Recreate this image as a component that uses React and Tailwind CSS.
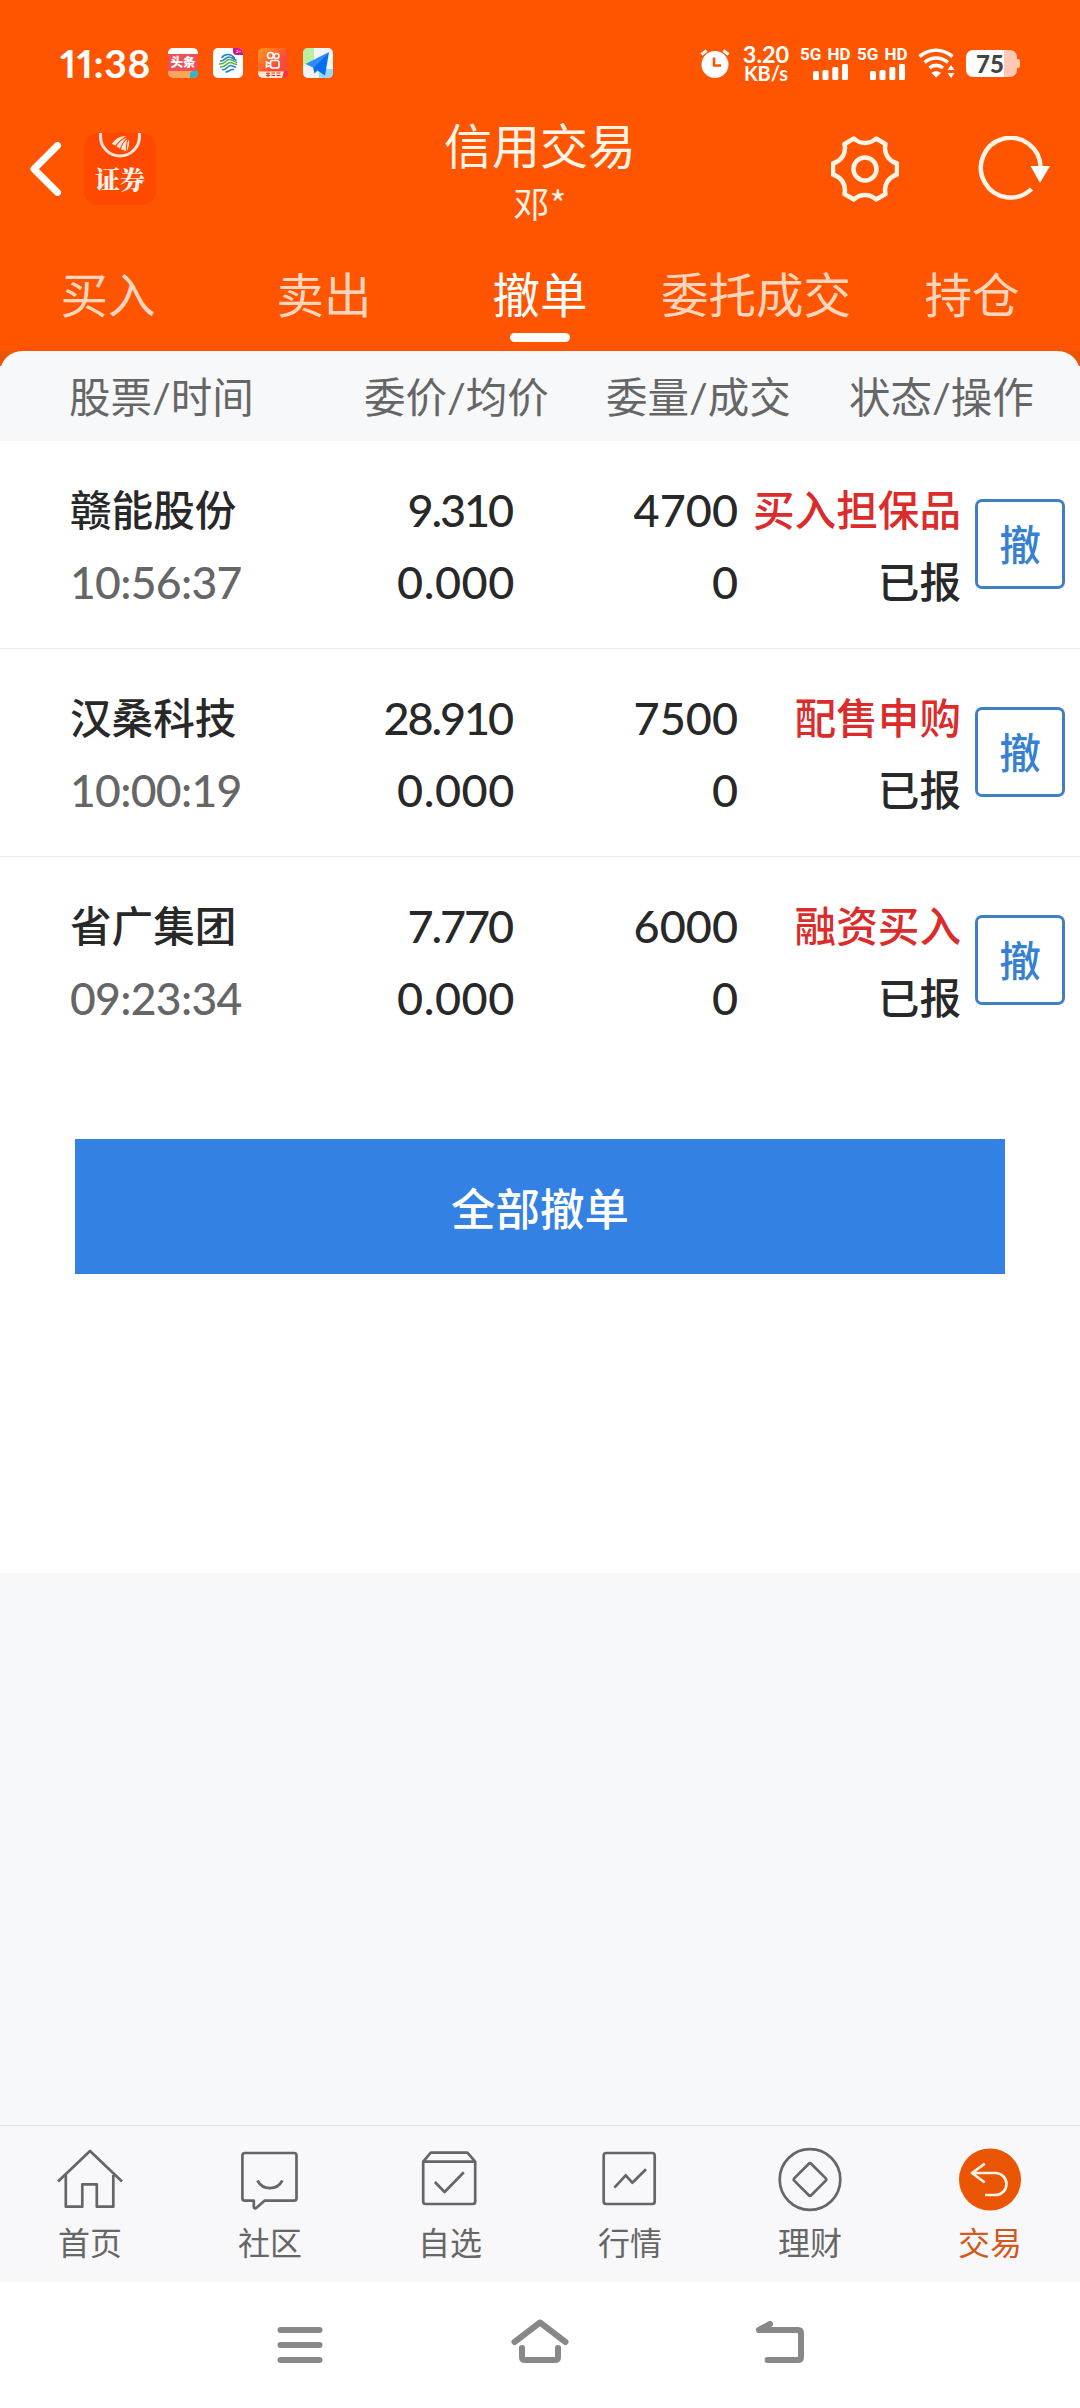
import { useState } from 'react';

const TABS = ['买入', '卖出', '撤单', '委托成交', '持仓'];

const ORDERS = [
  { id: 1, name: '赣能股份', time: '10:56:37', price: '9.310', avg: '0.000', qty: '4700', filled: '0', type: '买入担保品', status: '已报' },
  { id: 2, name: '汉桑科技', time: '10:00:19', price: '28.910', avg: '0.000', qty: '7500', filled: '0', type: '配售申购', status: '已报' },
  { id: 3, name: '省广集团', time: '09:23:34', price: '7.770', avg: '0.000', qty: '6000', filled: '0', type: '融资买入', status: '已报' },
];

const NAV_ITEMS = [
  {
    label: '首页',
    icon: (
      <path d="M4 37.5 36 7l32 30.5M11.8 31v31.7h16.5V40.3h14.5v22.4h16.5V31" />
    ),
  },
  {
    label: '社区',
    icon: (
      <>
        <path d="M10.9 9H60a2.5 2.5 0 0 1 2.5 2.5v42.7a2.5 2.5 0 0 1-2.5 2.5H30.5l-8.3 7.2c-1 .8-2.4.3-2.4-1v-6.2h-8.9a2.5 2.5 0 0 1-2.5-2.5V11.5A2.5 2.5 0 0 1 10.9 9z" />
        <path d="M23.4 36.5c5.6 10.2 19.4 10.2 25 0" />
      </>
    ),
  },
  {
    label: '自选',
    icon: (
      <>
        <path d="M9.2 17.7 16.8 8.7h36.6l7.8 9v39.8a2.5 2.5 0 0 1-2.5 2.5h-47a2.5 2.5 0 0 1-2.5-2.5zM9.2 17.7h52" />
        <path d="M20.9 38l9.7 10 19.2-19.7" />
      </>
    ),
  },
  {
    label: '行情',
    icon: (
      <>
        <rect x="9.7" y="9" width="51" height="51" rx="2.5" />
        <path d="M20.4 43.7l11.3-12.4 6.6 7.4L52 25.3" />
      </>
    ),
  },
  {
    label: '理财',
    icon: (
      <>
        <circle cx="36" cy="35.5" r="30.3" />
        <rect x="24" y="23.5" width="24" height="24" rx="2" transform="rotate(45 36 35.5)" />
      </>
    ),
  },
  {
    label: '交易',
    active: true,
    icon: (
      <>
        <circle cx="36" cy="35.5" r="31" fill="#ea5504" stroke="none" />
        <path d="M30.8 19.7 18 29l12.8 9.5M18 29h23.5a11 11 0 0 1 0 22H31" stroke="#fff0e4" />
      </>
    ),
  },
];

const Signal = () => (
  <div className="flex w-12 flex-col items-end">
    <span className="w-12 whitespace-nowrap font-[Roboto,sans-serif] text-[17px] leading-[14px] font-bold [word-spacing:2px]">5G HD</span>
    <svg className="mt-[3px] h-4 w-[35px]" viewBox="0 0 35 16" fill="#fff">
      <rect x="0" y="7" width="6" height="9" rx="1.5" />
      <rect x="9.5" y="6" width="6" height="10" rx="1.5" />
      <rect x="19.3" y="3" width="6" height="13" rx="1.5" />
      <rect x="29" y="0" width="6" height="16" rx="1.5" />
    </svg>
  </div>
);

const AppBadges = () => (
  <div className="ml-[18px] flex gap-[15px]">
    <div className="flex h-[30px] w-[30px] flex-col overflow-hidden rounded-[5px] bg-[#f04f55]">
      <div className="h-[6px] bg-white" />
      <div className="h-[17px] text-center text-[12.5px] leading-[18px] font-black whitespace-nowrap text-white">头条</div>
      <div className="flex h-[7px] bg-[#f9a55c]">
        <div className="ml-auto h-[7px] w-[8px] rounded-tl-[4px] bg-[#28b9cf]" />
      </div>
    </div>
    <svg className="h-[30px] w-[30px]" viewBox="0 0 30 30">
      <rect width="30" height="30" rx="5" fill="#fff" />
      <path d="M20 0h5a5 5 0 0 1 5 5v2h-6.5A3.5 3.5 0 0 1 20 3.5z" fill="#d6148a" />
      <path d="M23.5 2.5h1.5v2h-2m4-2v2" stroke="#fff" strokeWidth=".7" fill="none" />
      <g fill="none" strokeWidth="1.6" strokeLinecap="round">
        <path d="M9 9.5c3-4 9-4 12.5.5M7.5 13c4 .5 4.500-4 8.500-4 3 0 4 2 7 3" stroke="#2483c6" />
        <path d="M6.500 16c6 .5 6-4.500 10-4.500 3 0 4 1.500 7 3" stroke="#59b043" />
        <path d="M7.500 19c6 .5 6-4.500 9.500-4.500 2.500 0 3.500 1.500 6.500 2" stroke="#59b043" />
        <path d="M9.500 21.700c5 0 5-4.200 8-4.200 2 0 3 1.200 5 1.500M13 24c3 0 4-3 7.500-2.500" stroke="#2483c6" />
      </g>
    </svg>
    <svg className="h-[30px] w-[30px]" viewBox="0 0 30 30">
      <defs>
        <linearGradient id="kuaishou" x1="0" y1="0" x2="1" y2="1">
          <stop offset="0" stopColor="#ff9a1f" />
          <stop offset=".6" stopColor="#ff4a35" />
        </linearGradient>
      </defs>
      <rect width="30" height="30" rx="5" fill="url(#kuaishou)" />
      <g fill="none" stroke="#fff" strokeWidth="1.7">
        <circle cx="12.5" cy="7.5" r="3" />
        <circle cx="18.5" cy="8" r="2.5" />
        <rect x="12.5" y="12.5" width="8.5" height="7.5" rx="2" />
        <path d="M12 15.5 8.5 14v5l3.5-1.5" />
      </g>
      <path d="M0 23.5h26l-2 6.500H5a5 5 0 0 1-5-5z" fill="#fde5cf" />
      <path d="M8 25.200h4m-4 2.300h4m-2-3v4.500m3.500-4h3.500m-3.500 2.500h3.500m1.500-2.500h4m-4 2.500h4" stroke="#d8382c" strokeWidth="1.1" />
      <path d="M26 23h4v2a5 5 0 0 1-5 5z" fill="#ff2f4d" />
    </svg>
    <svg className="h-[30px] w-[30px]" viewBox="0 0 30 30">
      <rect width="30" height="30" rx="5" fill="#f1f5f8" />
      <path d="M5 0h6v13L0 17V5a5 5 0 0 1 5-5z" fill="#b9efa0" />
      <path d="M16 21h14v4a5 5 0 0 1-5 5h-9z" fill="#96d9f8" />
      <path d="M26 4 2.5 16l7.5 3.5z" fill="#2a8cff" />
      <path d="M26 4 10 19.5l1.5 6 3-3 7.5 5z" fill="#0a6df0" />
    </svg>
  </div>
);

const StatusBar = () => (
  <div className="flex h-[126px] items-center pr-[60px] pl-[60px] text-white">
    <span className="w-[90px] whitespace-nowrap text-[39px] leading-none font-bold tracking-[0.7px] proportional-nums">11:38</span>
    <AppBadges />
    <div className="ml-auto flex items-center">
      <svg className="h-[30px] w-[30px]" viewBox="0 0 30 30">
        <circle cx="15" cy="16.5" r="13.5" fill="#fff" />
        <path d="M1.5 6.5 6.5 2.5M28.5 6.5l-5-4" stroke="#fff" strokeWidth="3" />
        <path d="M14 9.5v8h7" stroke="#ff5500" strokeWidth="2.5" fill="none" />
      </svg>
      <div className="ml-[12px] flex w-12 flex-col items-center whitespace-nowrap">
        <span className="text-[23.5px] leading-[20px] font-bold">3.20</span>
        <span className="text-[20px] leading-[19px] font-bold">KB/s</span>
      </div>
      <div className="ml-[10px]"><Signal /></div>
      <div className="ml-[9px]"><Signal /></div>
      <svg className="ml-[13px] h-[30px] w-[38px]" viewBox="0 0 38 30" fill="none" stroke="#fff" strokeWidth="3.6">
        <path d="M1.5 8.5c10-8.3 23-8.3 33 0M6.5 14.5c7-6 16.5-6 23.5 0M11.5 20c4-3.5 9.5-3.5 13.5 0" />
        <path d="M18.2 29.5 13.5 25c2.5-2.3 7-2.3 9.500 0z" fill="#fff" stroke="none" />
        <path d="m33 17 3.5 5h-7zm0 13 3.5-5h-7z" fill="#fff" stroke="none" />
      </svg>
      <div className="ml-[10px] flex items-center">
        <div className="flex h-[27px] w-[51px] rounded-[7px] bg-[linear-gradient(90deg,#fff_38px,#ffc9b3_38px)] pl-[10px] text-[24px] leading-[27px] font-black text-[#444]">
          75
        </div>
        <div className="h-[9px] w-[3px] rounded-r-[2px] bg-[#ffc9b3]" />
      </div>
    </div>
  </div>
);

const Header = () => (
  <div className="flex h-[118px] justify-between">
    <div className="flex w-[400px] items-start pt-[7px] pl-[30px]">
      <svg className="mt-[9px] h-[54px] w-[32px]" viewBox="0 0 32 54" fill="none" stroke="#fff" strokeWidth="7" strokeLinecap="round" strokeLinejoin="round">
        <path d="M27.5 3.5 4 27l23.5 23.5" />
      </svg>
      <div className="ml-[22px] h-[72px] w-[72px] rounded-[14px] bg-[#ff4800]">
        <svg className="mx-auto h-[26px] w-[42px]" viewBox="0 0 42 26">
          <path d="M1.5 0v3.5a19.5 19.5 0 0 0 39 0V0" fill="none" stroke="#ffe5da" strokeWidth="3" />
          <g fill="#ffe5da">
            <path d="M13 11C16 5.5 22 2.5 27 3.5 23 5.5 18.5 9 16.5 12.5z" />
            <path d="M17.5 13.5C20 9 24 5.5 28 5c-3.5 3-6 6.5-7 10.5z" />
            <path d="M22 16.5c.5-4 3-8 6.5-10-1.5 4-2 8-1.5 11.5z" />
            <path d="M28 14.5c0-3 .5-6 2-8 .5 4 0 8-2.5 12z" />
          </g>
        </svg>
        <div className="text-center font-['Noto_Serif_CJK_SC','Noto_Sans_CJK_SC',serif] text-[25px] leading-[39px] font-black text-[#fff0e8]">证券</div>
      </div>
    </div>
    <div className="flex flex-col items-center text-[#fff4e6]">
      <h1 className="h-[60px] text-[48px] leading-[39px] font-normal">信用交易</h1>
      <span className="font-['Noto_Sans_CJK_SC',sans-serif] text-[36px] leading-[32px]">邓*</span>
    </div>
    <div className="flex w-[400px] items-start justify-end pt-[10px] pr-[29px]">
      <svg className="h-[66px] w-[68px]" viewBox="0 0 68 66" fill="none" stroke="#fff4e6" strokeWidth="4.5" strokeLinejoin="round">
        <path d="M23 2.5C29 8.5 39 8.5 45 2.5L54.5 8C52.5 17 57 24.5 66 27.5v11C57 41.5 52.5 49 54.5 58L45 63.5C39 57.5 29 57.5 23 63.5L13.5 58C15.5 49 11 41.5 2 38.5v-11C11 24.5 15.5 17 13.5 8z" />
        <circle cx="34" cy="33" r="11.5" />
      </svg>
      <svg className="ml-[79px] h-[66px] w-[73px]" viewBox="0 0 73 66" fill="none" stroke="#fff4e6" strokeWidth="4.5">
        <path d="M53.5 53A29.8 29.8 0 1 1 62.5 31" />
        <path d="M52.5 30h19.5L62 47z" fill="#fff" stroke="none" />
      </svg>
    </div>
  </div>
);

const OrderRow = ({ order, last }) => (
  <div className={`flex h-[208px] pt-[33px] pl-[70px] text-[41.6px] leading-[72px] font-medium text-[#282828] ${last ? '' : 'border-b border-[#ececec]'}`}>
    <div className="w-[224px] whitespace-nowrap">
      <div>{order.name}</div>
      <div className="text-[44.5px] tracking-[-0.7px] text-[#666]">{order.time}</div>
    </div>
    <div className="w-[221px] text-right text-[45px]">
      <div className="pr-[3px] tracking-[-2.1px]">{order.price}</div>
      <div className="tracking-[0.6px]">{order.avg}</div>
    </div>
    <div className="w-[223px] text-right text-[45px]">
      <div>{order.qty}</div>
      <div>{order.filled}</div>
    </div>
    <div className="w-[223px] text-right whitespace-nowrap">
      <div className="text-[#dc2b2b]">{order.type}</div>
      <div>{order.status}</div>
    </div>
    <button className="mt-[25px] ml-[14px] h-[90px] w-[90px] rounded-[7px] border-[3px] border-[#3f7fc8] leading-[86px] font-medium text-[#3580d4]">
      撤
    </button>
  </div>
);

export default function App() {
  const [activeTab, setActiveTab] = useState('撤单');

  return (
    <div className="flex h-[2408px] w-[1080px] flex-col bg-[#f7f8fa] font-[Lato,'Noto_Sans_CJK_SC',sans-serif]">
      {/* Top area */}
      <div className="h-[351px] bg-[#ff5500]">
        <StatusBar />
        <Header />
        <div className="grid h-[107px] grid-cols-5">
          {TABS.map((tab) => (
            <button
              key={tab}
              onClick={() => setActiveTab(tab)}
              className={`flex flex-col items-center pt-[16px] text-[47.5px] leading-[70px] whitespace-nowrap ${activeTab === tab ? 'text-white' : 'text-[#ffd5bd]'}`}
            >
              {tab}
              {activeTab === tab && <span className="mt-[3px] h-[9px] w-[60px] rounded-full bg-white" />}
            </button>
          ))}
        </div>
      </div>

      {/* Column titles */}
      <div className="h-[90px] bg-[linear-gradient(#ea5504_15px,#f7f8fa_15px)]">
        <div className="flex h-full rounded-t-[22px] bg-[#f7f8fa] pl-[69px] text-[41.5px] leading-[93px] whitespace-nowrap text-[#666]">
          <span className="w-[295px]">股票/时间</span>
          <span className="w-[242px]">委价/均价</span>
          <span className="w-[243px]">委量/成交</span>
          <span>状态/操作</span>
        </div>
      </div>

      {/* Orders */}
      <div className="h-[1132px] bg-white">
        {ORDERS.map((order, i) => (
          <OrderRow key={order.id} order={order} last={i === ORDERS.length - 1} />
        ))}
        <button className="mt-[74px] ml-[75px] block h-[135px] w-[930px] bg-[#3381e3] text-[44.5px] leading-[139px] font-medium text-white">
          全部撤单
        </button>
      </div>

      {/* Bottom navigation */}
      <div className="mt-auto grid h-[157px] grid-cols-6 border-t border-[#dfe2e5] bg-[#f8f8fa]">
        {NAV_ITEMS.map((item) => (
          <div key={item.label} className={`flex flex-col items-center pt-[18px] ${item.active ? 'text-[#d4581c]' : 'text-[#666]'}`}>
            <svg className="h-[72px] w-[72px]" viewBox="0 0 72 72" fill="none" stroke="currentColor" strokeWidth="2.7" strokeLinejoin="round">
              {item.icon}
            </svg>
            <span className="text-[32px] leading-[53px]">{item.label}</span>
          </div>
        ))}
      </div>

      {/* System keys */}
      <div className="flex h-[126px] items-center justify-center gap-[176px] bg-white">
        <svg className="h-[64px] w-[64px]" viewBox="0 0 64 64" fill="none" stroke="#888" strokeWidth="6" strokeLinecap="round">
          <path d="M12.5 17h39M12.5 32h39M12.5 47h39" />
        </svg>
        <svg className="h-[64px] w-[64px]" viewBox="0 0 64 64" fill="none" stroke="#888" strokeWidth="6" strokeLinecap="round" strokeLinejoin="round">
          <path d="M6.5 29 32 9.5 57.5 29M14 35v9q0 3 3 3h30q3 0 3-3v-9" />
        </svg>
        <svg className="h-[64px] w-[64px]" viewBox="0 0 64 64" fill="none" stroke="#888" strokeWidth="6" strokeLinecap="round" strokeLinejoin="round">
          <path d="M22 11 11 17h39q3 0 3 3v24q0 3-3 3H19.5" />
        </svg>
      </div>
    </div>
  );
}
